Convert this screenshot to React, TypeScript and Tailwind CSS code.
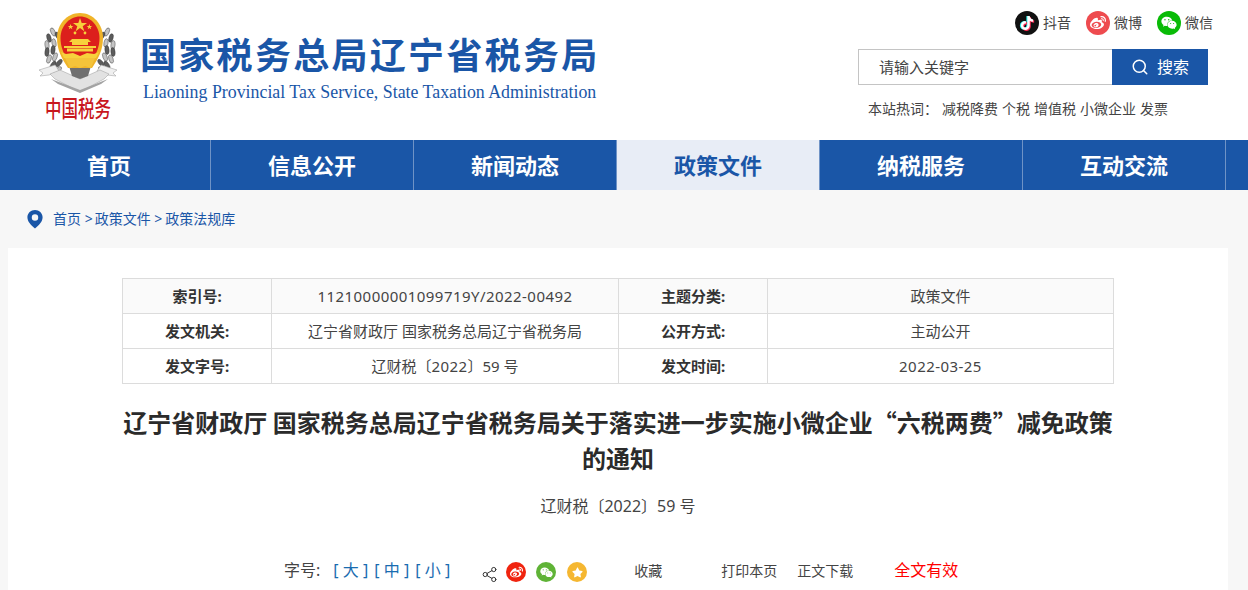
import React from "react";
import { FaTiktok, FaWeibo, FaWeixin, FaStar } from "react-icons/fa";
import { Search, Share2 } from "lucide-react";

const FONT = "font-['Noto_Sans','Noto_Sans_CJK_SC',sans-serif]";

const navItems = ["首页", "信息公开", "新闻动态", "政策文件", "纳税服务", "互动交流"];

// leaves of the wreath, left side; the right side is mirrored
const leaves = [
  [15, 20, -25], [11, 26, -15], [9, 33, -5], [9, 40, 5], [11, 47, 18], [15, 53, 32], [20, 58, 48],
  [20, 24, -30], [16, 31, -10], [15, 38, 5], [17, 45, 20], [21, 51, 38],
];

const Emblem: React.FC = () => (
  <svg viewBox="0 0 80 82" className="h-[82px] w-[80px]">
    {/* wreath */}
    {leaves.map(([x, y, r], i) => (
      <g key={i}>
        <ellipse cx={x} cy={y} rx="2.1" ry="4.4" transform={`rotate(${r} ${x} ${y})`} fill={i % 2 ? "#5c5c5c" : "#c4c4c4"} stroke="#2e2e2e" strokeWidth=".4" />
        <ellipse cx={84 - x} cy={y} rx="2.1" ry="4.4" transform={`rotate(${-r} ${84 - x} ${y})`} fill={i % 2 ? "#5c5c5c" : "#c4c4c4"} stroke="#2e2e2e" strokeWidth=".4" />
      </g>
    ))}
    {/* ribbon */}
    <path d="M1 58l16-5 4 6-10 4-9 1 3-3z" fill="#efefef" stroke="#a8a8a8" strokeWidth=".6" />
    <path d="M79 58l-16-5-4 6 10 4 9 1-3-3z" fill="#efefef" stroke="#a8a8a8" strokeWidth=".6" />
    <path d="M12 62l10-4 20 9 20-9 9 4-5 5-24 13-25-13z" fill="#e2e2e2" stroke="#9a9a9a" strokeWidth=".5" />
    <path d="M13 67l29 11 28-11-7 5-21 9-22-9z" fill="#a3a3a3" />
    <path d="M31 54h22l-3 10-8 3-8-3z" fill="#6f6f6f" />
    {/* shield */}
    <path d="M42 1c13 0 23 11 23 25 0 12-5 21-11 30H30C24 47 19 38 19 26 19 12 29 1 42 1z" fill="#f0b429" />
    <path d="M42 4.500c11 0 19.500 10 19.500 21.500 0 8-2.500 14-6 20H28.500c-3.500-6-6-12-6-20C22.500 14.500 31 4.500 42 4.500z" fill="#dc1f1c" />
    {/* stars */}
    <polygon points="42,6 43.700,11 49,11 44.700,14.200 46.300,19.200 42,16.100 37.700,19.200 39.300,14.200 35,11 40.300,11" fill="#f7d13c" />
    <polygon points="32.600,12 33.300,14 35.400,14 33.700,15.200 34.300,17.200 32.600,16 30.900,17.200 31.500,15.200 29.800,14 31.900,14" fill="#f7d13c" />
    <polygon points="51.400,12 52.100,14 54.200,14 52.500,15.200 53.100,17.200 51.400,16 49.700,17.200 50.300,15.200 48.600,14 50.700,14" fill="#f7d13c" />
    <circle cx="37" cy="21" r="1.400" fill="#f7d13c" />
    <circle cx="47" cy="21" r="1.400" fill="#f7d13c" />
    {/* gate */}
    <path d="M34 27h16l3 3H31zM34 30h16v3H34zM26 34h32v2H26z" fill="#f7d13c" />
    <path d="M29 36.500h26v3H29z" fill="#f7d13c" />
    <path d="M23 40l5 2 7-1 7 3 7-3 7 1 5-2-3 6H26z" fill="#f7d13c" />
    <path d="M27 46h30l-4 10-6-2-5 2-5-2-5 2z" fill="#f4c33a" />
  </svg>
);

const Social: React.FC<{ bg: string; label: string; children: React.ReactNode }> = ({ bg, label, children }) => (
  <div className="flex items-center gap-[4px]">
    <span className={`relative flex h-[24px] w-[24px] items-center justify-center rounded-full text-white ${bg}`}>{children}</span>
    <span className="text-[14px] leading-[24px] text-[#444]">{label}</span>
  </div>
);

const Row: React.FC<{ cells: React.ReactNode[]; className?: string }> = ({ cells, className }) => {
  const label = "border border-[#dcdcdc] text-center text-[15px] font-bold text-[#333]";
  const value = "border border-[#dcdcdc] text-center text-[15px] font-normal text-[#444]";
  return (
    <tr className={`h-[35px] ${className ?? ""}`}>
      <th className={`w-[149px] ${label}`}>{cells[0]}</th>
      <td className={`w-[347px] ${value}`}>{cells[1]}</td>
      <th className={`w-[149px] ${label}`}>{cells[2]}</th>
      <td className={`w-[346px] ${value}`}>{cells[3]}</td>
    </tr>
  );
};

export default function App() {
  return (
    <div className={`flex h-[590px] flex-col overflow-hidden bg-[#f7f7f7] ${FONT}`}>
      <header className="flex h-[140px] shrink-0 justify-between bg-white">
        <div className="flex">
          <div className="ml-[38px] mt-[12px] flex w-[80px] flex-col items-center">
            <Emblem />
            <span className="mt-[1px] origin-top scale-y-[1.35] whitespace-nowrap text-[16.5px] font-medium leading-[20px] text-[#c8161d]">中国税务</span>
          </div>
          <div className="ml-[22px] mt-[34px]">
            <h1 className="whitespace-nowrap text-[36px] font-bold leading-[44px] tracking-[2.3px] text-[#1a56a7]">国家税务总局辽宁省税务局</h1>
            <p className="ml-[3px] mt-[3px] whitespace-nowrap font-['Liberation_Serif',serif] text-[17.85px] leading-[22px] text-[#1a56a7]">
              Liaoning Provincial Tax Service, State Taxation Administration
            </p>
          </div>
        </div>
        <div className="mr-[40px] flex w-[350px] flex-col">
          <div className="-mr-[5px] mt-[11px] flex justify-end gap-[15px]">
            <Social bg="bg-[#111]" label="抖音">
              <FaTiktok size={14} className="absolute left-[4px] top-[5px] text-[#25f4ee]" />
              <FaTiktok size={14} className="absolute left-[6px] top-[6px] text-[#fe2c55]" />
              <FaTiktok size={14} className="absolute left-[5px] top-[5px] text-white" />
            </Social>
            <Social bg="bg-[#ee4b4f]" label="微博"><FaWeibo size={16} /></Social>
            <Social bg="bg-[#09bb07]" label="微信"><FaWeixin size={16} /></Social>
          </div>
          <div className="mt-[14px] flex h-[36px]">
            <div className="flex w-[254px] items-center border border-r-0 border-[#c4c4c4] pl-[20px] text-[15px] text-[#444]">请输入关键字</div>
            <button className="flex w-[96px] items-center justify-center gap-[8px] bg-[#1a56a7] text-[16px] text-white">
              <Search size={18} strokeWidth={2} />
              搜索
            </button>
          </div>
          <div className="ml-[10px] mt-[15px] flex whitespace-nowrap text-[14px] leading-[18px] text-[#444]">
            <span>本站热词：</span>
            <span className="ml-[4px] flex gap-[4px]">
              <span>减税降费</span>
              <span>个税</span>
              <span>增值税</span>
              <span>小微企业</span>
              <span>发票</span>
            </span>
          </div>
        </div>
      </header>

      <nav className="flex h-[50px] shrink-0 bg-[#1a56a7] pl-[8px]">
        {navItems.map((item) => (
          <a
            key={item}
            className={`flex w-[203px] items-center justify-center border-r border-[#6f93c6] text-[22px] font-bold ${
              item === "政策文件" ? "bg-[#e8edf6] text-[#1a56a7]" : "text-white"
            }`}
          >
            {item}
          </a>
        ))}
      </nav>

      <div className="flex h-[58px] shrink-0 items-center pl-[27px] text-[14px] text-[#1a56a7]">
        <svg viewBox="0 0 16 20" className="h-[19px] w-[16px]">
          <path fillRule="evenodd" d="M8 0c4.400 0 8 3.400 8 7.700 0 4.600-4 8.500-8 11.800C4 16.200 0 12.300 0 7.700 0 3.400 3.600 0 8 0zm0 4.400a3.400 3.400 0 1 0 0 6.800 3.400 3.400 0 0 0 0-6.800z" fill="#1a56a7" />
        </svg>
        <span className="mb-[2px] ml-[10px]">首页 &gt;</span>
        <span className="mb-[2px] ml-[2px]">政策文件 &gt;</span>
        <span className="mb-[2px] ml-[3px]">政策法规库</span>
      </div>

      <main className="mx-[8px] w-[1220px] flex-1 bg-white pt-[30px]">
        <table className="ml-[114px] w-[991px] table-fixed border-collapse">
          <tbody>
            <Row
              className="bg-[#fafafa]"
              cells={["索引号:", <span className="tracking-[.45px]">11210000001099719Y/2022-00492</span>, "主题分类:", "政策文件"]}
            />
            <Row cells={["发文机关:", "辽宁省财政厅 国家税务总局辽宁省税务局", "公开方式:", "主动公开"]} />
            <Row
              cells={[
                "发文字号:",
                <>辽财税〔<span className="tracking-[.45px]">2022</span>〕59 号</>,
                "发文时间:",
                <span className="tracking-[.45px]">2022-03-25</span>,
              ]}
            />
          </tbody>
        </table>

        <h2 className="mx-auto mt-[20px] w-[1000px] text-center font-['Noto_Sans_CJK_SC',sans-serif] text-[24px] font-bold leading-[36px] text-[#2b2b2b]">
          辽宁省财政厅 国家税务总局辽宁省税务局关于落实进一步实施小微企业“六税两费”减免政策的通知
        </h2>
        <p className="mt-[18px] text-center text-[16px] leading-[24px] text-[#444]">辽财税〔2022〕59 号</p>

        <div className="ml-[276px] mt-[38px] flex h-[28px] items-center whitespace-nowrap text-[#444]">
          <span className="text-[16px]">字号:</span>
          <span className="ml-[13px] flex gap-[6px] text-[16px] text-[#1a6cb0]">
            <span className="w-[35px] whitespace-pre text-center">[ 大 ]</span>
            <span className="w-[35px] whitespace-pre text-center">[ 中 ]</span>
            <span className="w-[35px] whitespace-pre text-center">[ 小 ]</span>
          </span>
          <Share2 size={17} strokeWidth={1.4} className="ml-[31px] mt-[9px] text-[#333]" />
          <span className="ml-[8px] mt-[4px] flex h-[20px] w-[20px] items-center justify-center rounded-full bg-[#f0240f] text-white"><FaWeibo size={13} /></span>
          <span className="ml-[10px] mt-[4px] flex h-[20px] w-[20px] items-center justify-center rounded-full bg-[#5fb336] text-white"><FaWeixin size={13} /></span>
          <span className="ml-[11px] mt-[4px] flex h-[20px] w-[20px] items-center justify-center rounded-full bg-[#f5b731] text-white"><FaStar size={11} /></span>
          <span className="ml-[47px] text-[14px]">收藏</span>
          <span className="ml-[59px] text-[14px]">打印本页</span>
          <span className="ml-[20px] text-[14px]">正文下载</span>
          <span className="ml-[41px] text-[16px] text-[#ff0000]">全文有效</span>
        </div>
      </main>
    </div>
  );
}
